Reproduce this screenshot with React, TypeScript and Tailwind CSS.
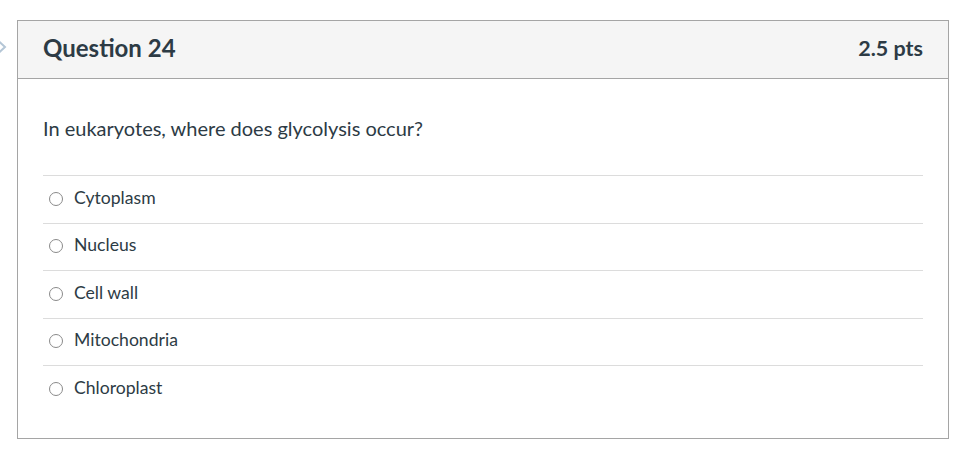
const answers = ['Cytoplasm', 'Nucleus', 'Cell wall', 'Mitochondria', 'Chloroplast'];

function Arrow() {
  return (
    <svg width="8" height="16" viewBox="0 0 8 16" className="absolute left-0 top-[39px]">
      <path d="M-2 1.5 L5 8 L-2 14.5" fill="none" stroke="#b4c6d6" strokeWidth="2" />
    </svg>
  );
}

export default function App() {
  return (
    <div className="relative h-[464px] w-[967px] bg-white font-['Lato',sans-serif] text-[#2d3b45]">
      <Arrow />
      <div className="ml-[17px] pt-[20px]">
        <div className="h-[419px] w-[932px] border border-[#a5a5a5]">
          <div className="flex h-[58px] items-center justify-between border-b border-[#a5a5a5] bg-[#f5f5f5] px-[25px] pb-[3px]">
            <div className="text-[24px] font-bold">Question 24</div>
            <div className="text-[21.5px] font-bold">2.5 pts</div>
          </div>
          <div className="px-[25px]">
            <div className="pb-[34px] pt-[36px] text-[20px] leading-[26px]">In eukaryotes, where does glycolysis occur?</div>
            {answers.map((a) => (
              <div key={a} className="flex h-[47.5px] items-center border-t border-[#dcdcdc] pb-[3px] pl-[6px]">
                <span className="mr-[11px] mt-[2px] h-[14px] w-[14px] shrink-0 rounded-full border border-[#8a8a8a]" />
                <span className="text-[17.6px]">{a}</span>
              </div>
            ))}
          </div>
        </div>
      </div>
    </div>
  );
}
